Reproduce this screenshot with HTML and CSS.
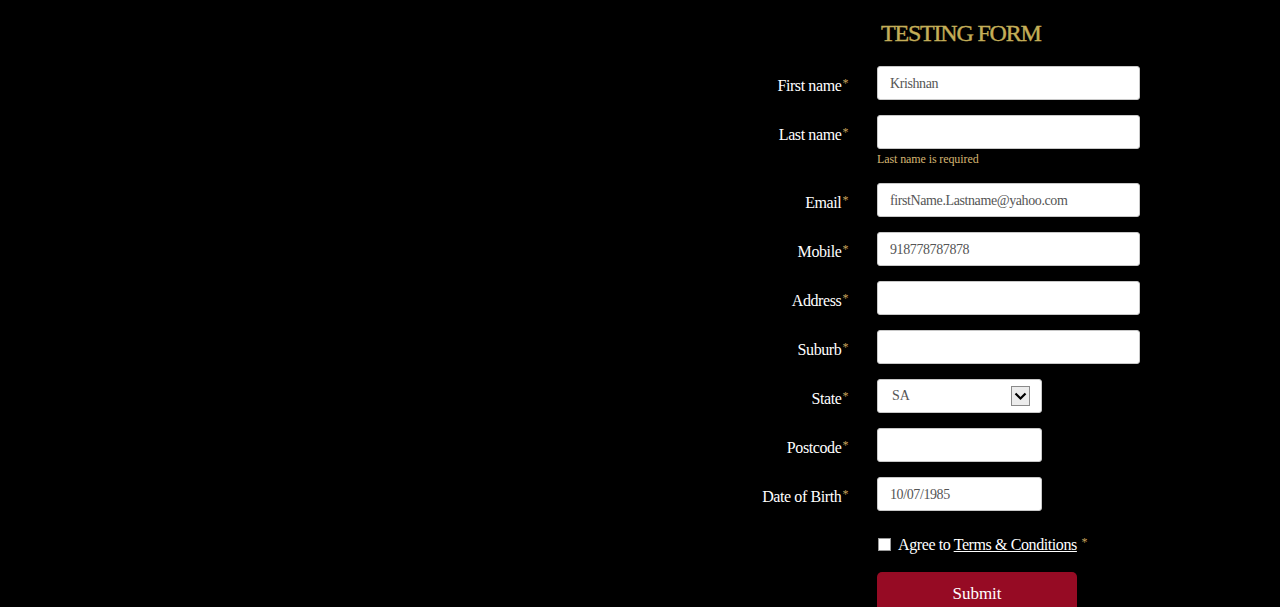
FILE: index.html
```html
<!DOCTYPE html>
<html>
<head>
<meta charset="utf-8">
<link rel="stylesheet" href="styles.css">
</head>
<body>
<form class="form">
  <div></div>
  <h1 class="title">TESTING FORM</h1>

  <label class="label">First name<span class="req">*</span></label>
  <div class="field"><input class="input" type="text" value="Krishnan"></div>

  <label class="label">Last name<span class="req">*</span></label>
  <div class="field">
    <input class="input" type="text" value="">
    <div class="error">Last name is required</div>
  </div>

  <label class="label">Email<span class="req">*</span></label>
  <div class="field"><input class="input" type="text" value="firstName.Lastname@yahoo.com"></div>

  <label class="label">Mobile<span class="req">*</span></label>
  <div class="field"><input class="input" type="text" value="918778787878"></div>

  <label class="label">Address<span class="req">*</span></label>
  <div class="field"><input class="input" type="text" value=""></div>

  <label class="label">Suburb<span class="req">*</span></label>
  <div class="field"><input class="input" type="text" value=""></div>

  <label class="label">State<span class="req">*</span></label>
  <div class="field">
    <div class="select">
      <span class="select-value">SA</span>
      <span class="select-btn">
        <svg width="13" height="9" viewBox="0 0 13 9"><path d="M1.5 1.5 L6.5 6.5 L11.5 1.5" fill="none" stroke="#000" stroke-width="2.2"/></svg>
      </span>
    </div>
  </div>

  <label class="label">Postcode<span class="req">*</span></label>
  <div class="field"><input class="input short" type="text" value=""></div>

  <label class="label">Date of Birth<span class="req">*</span></label>
  <div class="field"><input class="input short" type="text" value="10/07/1985"></div>

  <div></div>
  <div class="agree">
    <span class="checkbox"></span>
    <span>Agree to <a class="terms" href="#">Terms &amp; Conditions</a> <span class="req">*</span></span>
  </div>

  <div></div>
  <div><button class="submit" type="button">Submit</button></div>
</form>
</body>
</html>
```

FILE: styles.css
```css
html, body {
  margin: 0;
  padding: 0;
  background: #000;
  height: 100%;
  overflow: hidden;
}

body {
  font-family: "Liberation Serif", "DejaVu Serif", serif;
  color: #fff;
}

.form {
  display: grid;
  grid-template-columns: 140px 263px;
  column-gap: 29px;
  row-gap: 15px;
  margin-left: 708px;
  padding-top: 17px;
  align-items: start;
}

.title {
  margin: 0 0 2px 0;
  padding-left: 4px;
  font-size: 24px;
  font-weight: normal;
  line-height: 32px;
  color: #c4ae58;
  letter-spacing: -1.2px;
  -webkit-text-stroke: 0.4px #c4ae58;
}

.label {
  text-align: right;
  font-size: 16px;
  line-height: 34px;
  height: 34px;
  letter-spacing: -0.4px;
  color: #fff;
}

.req {
  color: #c9a25c;
  font-size: 12px;
  vertical-align: 4px;
  margin-left: 1px;
}

.field {
  display: flex;
  flex-direction: column;
}

.input {
  box-sizing: border-box;
  width: 263px;
  height: 34px;
  margin: 0;
  padding: 2px 12px 0;
  border: 1px solid #c8c8c8;
  border-radius: 3px;
  background: #fff;
  font-family: "Liberation Serif", "DejaVu Serif", serif;
  font-size: 14px;
  color: #555;
  letter-spacing: -0.4px;
  outline: none;
}

.input.short {
  width: 165px;
}

.error {
  font-size: 12px;
  color: #d4b572;
  line-height: 14px;
  margin-top: 3px;
  margin-bottom: 2px;
  letter-spacing: -0.1px;
}

.select {
  box-sizing: border-box;
  width: 165px;
  height: 34px;
  border: 1px solid #c8c8c8;
  border-radius: 3px;
  background: #fff;
  display: flex;
  align-items: center;
  justify-content: space-between;
  padding: 0 11px 0 14px;
}

.select-value {
  font-size: 14px;
  color: #555;
}

.select-btn {
  box-sizing: border-box;
  width: 19px;
  height: 20px;
  border: 1px solid #8a8a8a;
  background: #ececec;
  display: flex;
  align-items: center;
  justify-content: center;
}

.agree {
  display: flex;
  align-items: center;
  gap: 7px;
  height: 22px;
  margin-top: 7px;
  font-size: 16px;
  letter-spacing: -0.4px;
}

.checkbox {
  box-sizing: border-box;
  width: 13px;
  height: 13px;
  background: #fff;
  border: 1px solid #999;
  margin-left: 1px;
}

.terms {
  color: #fff;
  text-decoration: underline;
}

.submit {
  margin-top: 2px;
  width: 200px;
  height: 44px;
  border: none;
  border-radius: 5px;
  background: #960b24;
  color: #fff;
  font-family: "Liberation Serif", "DejaVu Serif", serif;
  font-size: 17px;
  padding: 0 0 1px;
}
```
